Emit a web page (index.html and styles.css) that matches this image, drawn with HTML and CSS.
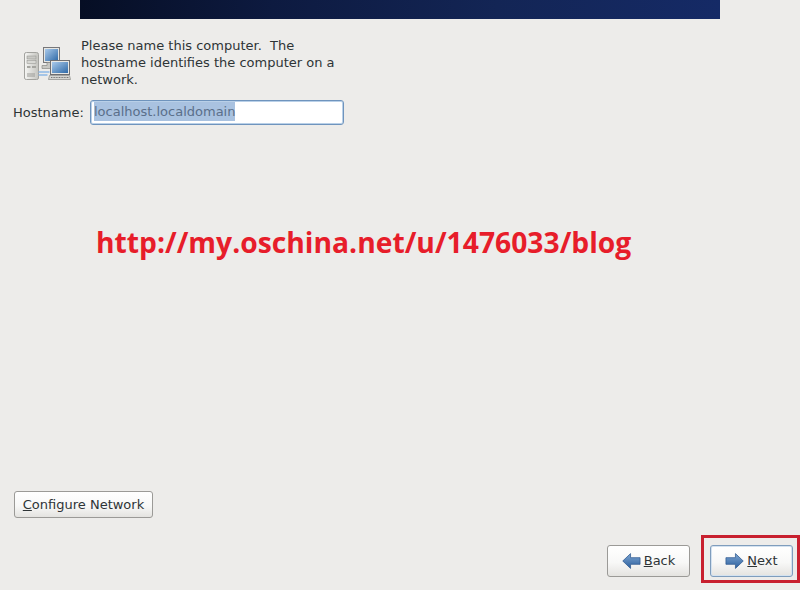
FILE: index.html
```html
<!DOCTYPE html>
<html lang="en">
<head>
<meta charset="utf-8">
<title>Hostname</title>
<link rel="stylesheet" href="styles.css">
</head>
<body>
<div class="page">
  <div class="banner"></div>
  <div class="intro">
    <svg class="net-icon" width="48" height="36" viewBox="0 0 48 36">
      <defs>
        <linearGradient id="scr" x1="0" y1="0" x2="1" y2="1"><stop offset="0" stop-color="#a9c9ea"/><stop offset="1" stop-color="#2f6aa8"/></linearGradient>
        <linearGradient id="tower" x1="0" y1="0" x2="1" y2="0"><stop offset="0" stop-color="#f6f6f4"/><stop offset="1" stop-color="#c4c4bf"/></linearGradient>
      </defs>
      <path d="M1.500 8 Q1.500 6.500 3.500 6.500 H13.500 Q15.500 6.500 15.500 8.500 V32 Q15.500 33.500 13.500 33.500 H3.500 Q1.500 33.500 1.500 32Z" fill="url(#tower)" stroke="#a3a39f"/>
      <rect x="4" y="10" width="9" height="3" fill="#c9c9c5" stroke="#8f8f8b" stroke-width=".5"/>
      <rect x="4" y="14.500" width="9" height="3" fill="#d8d8d4" stroke="#8f8f8b" stroke-width=".5"/>
      <rect x="4" y="20" width="3.500" height="2" fill="#a5a5a0"/>
      <rect x="9" y="20" width="4" height="2" fill="#a5a5a0"/>
      <path d="M5 27v4M7 27v4M9 27v4M11 27v4" stroke="#9a9a96" stroke-width="1"/>
      <path d="M15.500 26h11M15.500 29h9" stroke="#8db8e6" stroke-width="1.500"/>
      <rect x="20.500" y="1.500" width="16" height="15" fill="#e6e6e3" stroke="#77777a"/>
      <rect x="22" y="3" width="13" height="12" fill="url(#scr)"/>
      <path d="M24 16.500h8v3h-2v3h-11v-3h5Z" fill="#c8c8c4" stroke="#8a8a86" stroke-width=".7"/>
      <rect x="27.500" y="14.500" width="19" height="14" fill="#e8e8e5" stroke="#6f6f72"/>
      <rect x="29" y="16" width="16" height="11" fill="url(#scr)"/>
      <path d="M26.500 29.500h20l1 4h-22Z" fill="#d6d6d2" stroke="#8a8a86" stroke-width=".7"/>
      <path d="M28 31.500h18" stroke="#777" stroke-width="1" stroke-dasharray="1 .6"/>
    </svg>
    <p class="intro-text">Please name this computer.&nbsp; The hostname identifies the computer on a network.</p>
  </div>
  <div class="host-row">
    <label class="host-label" for="host">Hostname:</label>
    <div class="host-input" id="host"><span class="selected">localhost.localdomain</span></div>
  </div>
  <div class="spacer"></div>
  <div class="config-row">
    <div class="btn config"><span><u>C</u>onfigure Network</span></div>
  </div>
  <div class="nav-row">
    <div class="btn nav">
      <svg width="19" height="18" viewBox="0 0 20 18"><defs><linearGradient id="arr" x1="0" y1="0" x2="0" y2="1"><stop offset="0" stop-color="#7da6d2"/><stop offset="1" stop-color="#2c5f9e"/></linearGradient></defs><path d="M.8 9 9 1.200V5.500H19V12.500H9V16.800Z" fill="url(#arr)" stroke="#2f5a90" stroke-width=".8"/></svg>
      <span class="nav-label"><u>B</u>ack</span>
    </div>
    <div class="btn nav focused">
      <svg width="19" height="18" viewBox="0 0 20 18"><defs><linearGradient id="arr2" x1="0" y1="0" x2="0" y2="1"><stop offset="0" stop-color="#7da6d2"/><stop offset="1" stop-color="#2c5f9e"/></linearGradient></defs><path d="M19.200 9 11 1.200V5.500H1V12.500H11V16.800Z" fill="url(#arr2)" stroke="#2f5a90" stroke-width=".8"/></svg>
      <span class="nav-label"><u>N</u>ext</span>
    </div>
  </div>
  <div class="watermark">http://my.oschina.net/u/1476033/blog</div>
  <div class="annotation"></div>
</div>
</body>
</html>
```
FILE: styles.css
```css
html, body { margin: 0; padding: 0; }
body { width: 800px; height: 590px; overflow: hidden; }
.page {
  position: relative;
  width: 800px;
  height: 590px;
  display: flex;
  flex-direction: column;
  background: #edecea;
  font-family: "DejaVu Sans", sans-serif;
  font-size: 13px;
  color: #2e3436;
}
.banner {
  height: 19px;
  margin: 0 80px;
  background: linear-gradient(90deg, #060e24 0%, #0d1a40 30%, #132555 65%, #152a66 100%);
  flex: none;
}
.intro {
  display: flex;
  align-items: center;
  margin-top: 18px;
  padding-left: 23px;
}
.net-icon { flex: none; margin: 2px 10px 0 0; }
.intro-text {
  margin: 0;
  width: 265px;
  line-height: 17px;
}
.host-row {
  display: flex;
  align-items: center;
  margin-top: 12px;
  padding-left: 13px;
}
.host-label { width: 77px; }
.host-input {
  box-sizing: border-box;
  width: 254px;
  height: 25px;
  padding: 1px 0 0 3px;
  background: #fff;
  border: 1px solid #6f94bd;
  border-radius: 3px;
  box-shadow: inset 0 0 0 1px #b9d0e8;
  line-height: 20px;
}
.selected { background: #a9c2e0; color: #5a6f8a; padding: 2px 0; }
.spacer { flex: 1; }
.btn {
  display: flex;
  align-items: center;
  justify-content: center;
  box-sizing: border-box;
  background: linear-gradient(180deg, #ffffff 0%, #f8f8f7 55%, #e4e3e0 100%);
  border: 1px solid #9b9a97;
  border-radius: 3px;
  color: #2e3436;
}
.config-row { padding-left: 14px; margin-bottom: 27px; }
.config { width: 139px; height: 27px; }
.nav-row {
  display: flex;
  justify-content: flex-end;
  gap: 20px;
  padding-right: 7px;
  margin-bottom: 13px;
}
.nav { width: 83px; height: 32px; gap: 3px; }
.nav-label { margin-top: -1px; }
.focused {
  border-color: #7f9dbd;
  box-shadow: inset 0 0 0 1px #d4e2f0;
}
.watermark {
  position: absolute;
  left: 96px;
  top: 223px;
  font-family: "Open Sans", sans-serif;
  font-weight: 700;
  font-size: 28.25px;
  line-height: 38px;
  color: #e71d2a;
  white-space: nowrap;
}
.annotation {
  position: absolute;
  left: 701px;
  top: 535px;
  width: 99px;
  height: 48px;
  box-sizing: border-box;
  border: 3px solid #c8202f;
}
```
